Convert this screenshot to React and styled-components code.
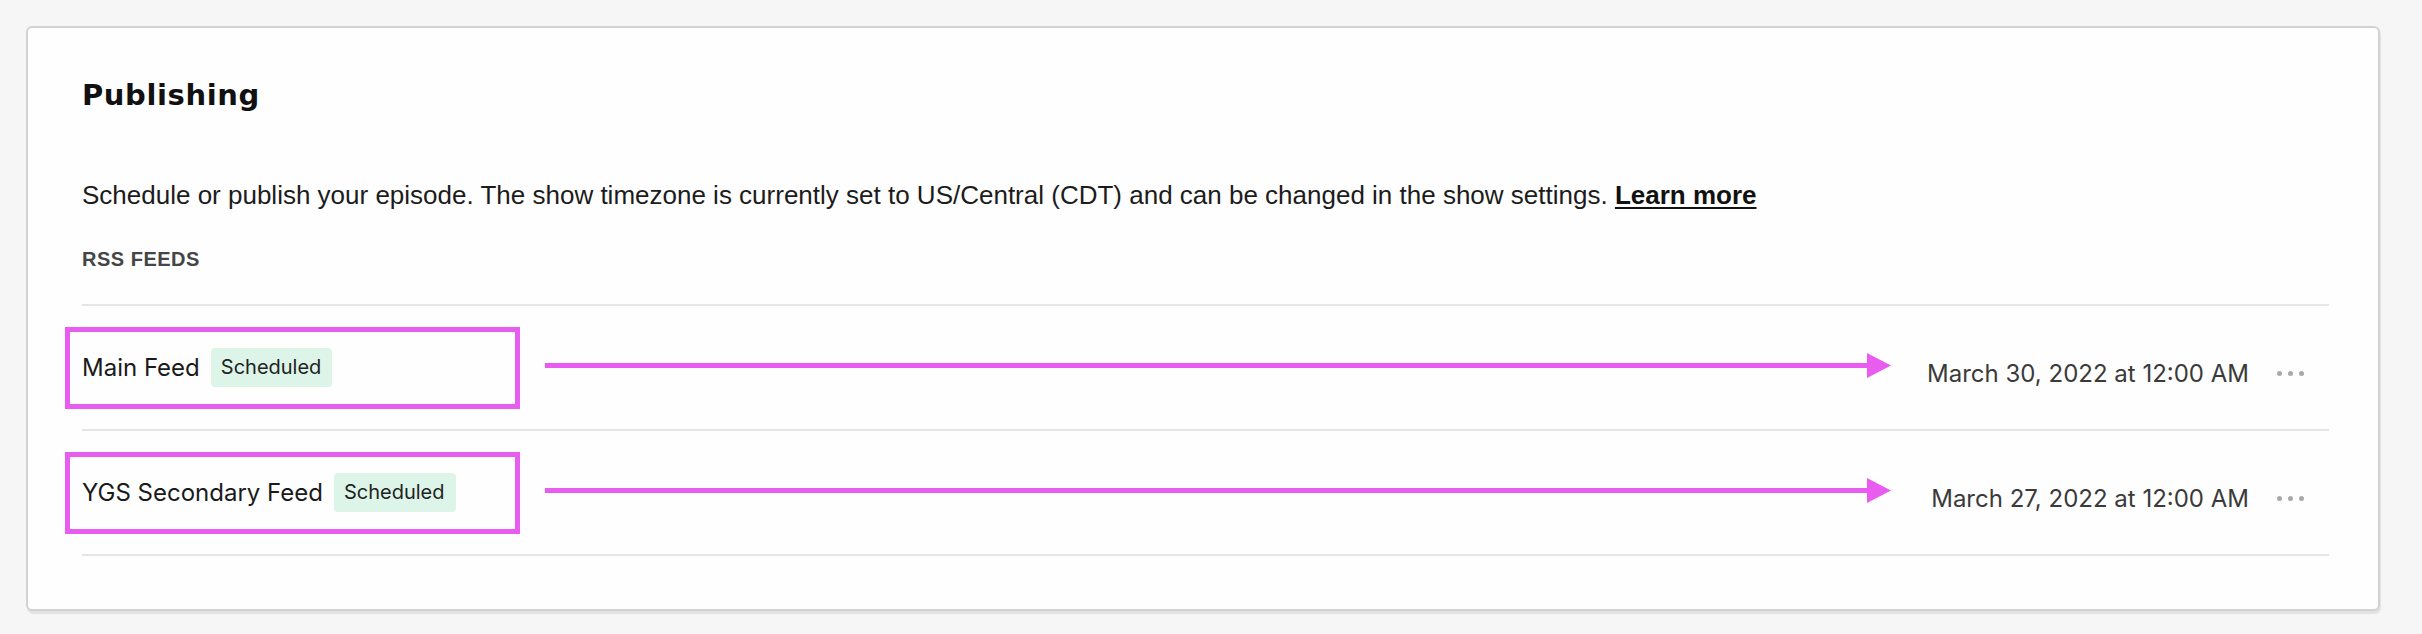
import React from "react";
import styled, { createGlobalStyle } from "styled-components";

const magenta = "#e85cf0";

const feeds = [
  { name: "Main Feed", status: "Scheduled", date: "March 30, 2022 at 12:00 AM" },
  { name: "YGS Secondary Feed", status: "Scheduled", date: "March 27, 2022 at 12:00 AM" },
];

export default function App() {
  return (
    <>
      <GlobalStyle />
      <Page>
        <Card>
          <Title>Publishing</Title>
          <Description>
            Schedule or publish your episode. The show timezone is currently set
            to US/Central (CDT) and can be changed in the show settings.{" "}
            <LearnMore href="#">Learn more</LearnMore>
          </Description>
          <SectionLabel>RSS FEEDS</SectionLabel>
          <FeedList>
            {feeds.map((feed) => (
              <FeedRow key={feed.name}>
                <FeedName>
                  <Name>{feed.name}</Name>
                  <Badge>{feed.status}</Badge>
                </FeedName>
                <Arrow>
                  <Shaft />
                  <svg width="24" height="25" viewBox="0 0 24 25">
                    <polygon points="0,0 24,12.5 0,25" fill={magenta} />
                  </svg>
                </Arrow>
                <DateText>{feed.date}</DateText>
                <MoreButton aria-label="More options">
                  <Dot />
                  <Dot />
                  <Dot />
                </MoreButton>
              </FeedRow>
            ))}
          </FeedList>
        </Card>
      </Page>
    </>
  );
}

const GlobalStyle = createGlobalStyle`
  body {
    margin: 0;
    background: #f6f6f6;
    font-family: "Liberation Sans", Arial, sans-serif;
  }
`;

const Page = styled.div`
  padding: 26px 42px 22px 26px;
`;

const Card = styled.section`
  background: #fefefe;
  border: 2px solid #d2d2d2;
  border-radius: 6px;
  box-shadow: 1px 3px 1px rgba(0, 0, 0, 0.08);
  padding: 50px 49px 53px 54px;
`;

const Title = styled.h2`
  margin: 0;
  font-family: "DejaVu Sans", sans-serif;
  font-weight: 700;
  font-size: 29px;
  line-height: 34px;
  letter-spacing: 0.6px;
  color: #111;
`;

const Description = styled.p`
  margin: 66px 0 0;
  font-size: 26px;
  line-height: 34px;
  color: #1c1c1c;
`;

const LearnMore = styled.a`
  color: #111;
  font-weight: 700;
  text-decoration: underline;
  text-underline-offset: 3px;
`;

const SectionLabel = styled.div`
  margin-top: 35px;
  font-weight: 700;
  font-size: 20px;
  line-height: 24px;
  letter-spacing: 0.5px;
  color: #454545;
`;

const FeedList = styled.div`
  margin-top: 33px;
  border-top: 2px solid #e6e6e6;
`;

const FeedRow = styled.div`
  display: flex;
  align-items: center;
  height: 123px;
  border-bottom: 2px solid #e6e6e6;
  padding-right: 25px;
`;

const FeedName = styled.div`
  display: flex;
  align-items: center;
  gap: 11px;
  box-sizing: border-box;
  width: 455px;
  height: 82px;
  margin-left: -17px;
  padding-left: 12px;
  border: 5px solid ${magenta};
`;

const Name = styled.span`
  font-family: Inter, sans-serif;
  font-size: 24px;
  color: #1a1a1a;
`;

const Badge = styled.span`
  font-family: Inter, sans-serif;
  font-size: 20px;
  line-height: 39px;
  padding: 0 11px 0 10px;
  border-radius: 4px;
  background: #ddf5e9;
  color: #222;
`;

const Arrow = styled.div`
  flex: 1;
  display: flex;
  align-items: center;
  margin: -5px 34px 0 25px;

  svg {
    flex-shrink: 0;
    margin-left: -2px;
  }
`;

const Shaft = styled.div`
  flex: 1;
  height: 5px;
  background: ${magenta};
`;

const DateText = styled.span`
  min-width: 324px;
  margin-top: 12px;
  text-align: right;
  font-family: Inter, sans-serif;
  font-size: 24px;
  color: #3a3a3a;
  white-space: nowrap;
`;

const MoreButton = styled.button`
  display: flex;
  gap: 6px;
  margin: 12px 0 0 28px;
  padding: 0;
  border: 0;
  background: none;
  cursor: pointer;
`;

const Dot = styled.span`
  width: 5px;
  height: 5px;
  border-radius: 50%;
  background: #a9a9a9;
`;
